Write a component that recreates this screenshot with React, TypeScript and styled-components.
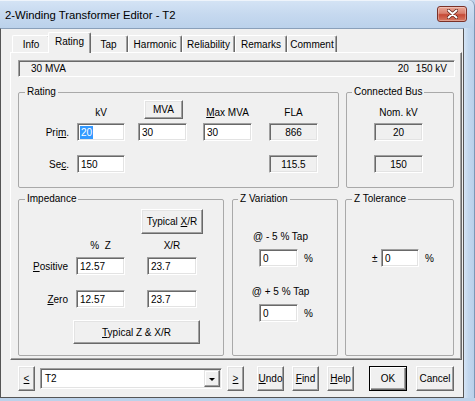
import React from 'react'
import styled, { createGlobalStyle } from 'styled-components'

const GlobalStyle = createGlobalStyle`
  html, body {
    margin: 0;
    padding: 0;
    background: #ffffff;
  }
  body {
    font-family: "Liberation Sans", Arial, sans-serif;
    font-size: 10px;
    color: #000;
  }
  * {
    box-sizing: border-box;
  }
`

const Window = styled.div`
  width: 475px;
  height: 401px;
  display: flex;
  flex-direction: column;
  background: #bed4ec;
  overflow: hidden;
`

const TitleBar = styled.div`
  height: 28px;
  flex: none;
  display: flex;
  align-items: center;
  justify-content: space-between;
  padding: 0 8px 0 5px;
  background: linear-gradient(180deg, #d5e4f5 0%, #c6d9ef 50%, #bbd2eb 100%);
  border-top-right-radius: 6px;
  box-shadow: inset -1px 0 0 #7d97b6, inset 0 1px 0 #eef4fb;
`

const Title = styled.span`
  font-size: 11.3px;
  padding-top: 1px;
  color: #000;
`

const CloseButton = styled.div`
  width: 30px;
  height: 16px;
  border-radius: 3px;
  border: 1px solid #7a3128;
  background: linear-gradient(180deg, #e9a898 0%, #d97f6d 45%, #c64a36 55%, #d77a63 100%);
  box-shadow: inset 0 0 0 1px rgba(255, 255, 255, 0.3);
  display: flex;
  align-items: center;
  justify-content: center;
`

const Body = styled.div`
  height: 370px;
  flex: none;
  display: flex;
`

const Client = styled.div`
  width: 464px;
  flex: none;
  display: flex;
  flex-direction: column;
  background: #f0f0f0;
  border: 1px solid #555;
  border-top-color: #8aa0ba;
`

const RightFrame = styled.div`
  flex: 1;
  background: linear-gradient(90deg, #d6e5f5 0%, #c2d7ee 40%, #b8cfe9 100%);
  box-shadow: inset -1px 0 0 #7d97b6;
`

const BottomFrame = styled.div`
  flex: 1;
  background: #bcd2ea;
`

const TabStrip = styled.div`
  height: 20px;
  margin-top: 3px;
  padding-left: 11px;
  display: flex;
  align-items: flex-end;
`

const Tab = styled.div<{ $w: number; $active?: boolean }>`
  position: relative;
  z-index: ${({ $active }) => ($active ? 1 : 0)};
  width: ${({ $w, $active }) => $w + ($active ? 4 : 0)}px;
  height: ${({ $active }) => ($active ? 21 : 17)}px;
  margin: ${({ $active }) => ($active ? '0 -2px -1px -2px' : '0')};
  padding-bottom: ${({ $active }) => ($active ? 3 : 0)}px;
  display: flex;
  align-items: center;
  justify-content: center;
  background: #f0f0f0;
  border-top: 1px solid #fff;
  border-left: 1px solid #fff;
  border-right: 1px solid #696969;
  border-radius: 2px 2px 0 0;
  box-shadow: inset -1px 0 0 #a0a0a0;
`

const TabPanel = styled.div`
  height: 308px;
  margin: 0 1px 0 9px;
  padding: 7px 6px 0 7px;
  display: flex;
  flex-direction: column;
  border: 1px solid;
  border-color: #fff #696969 #696969 #fff;
  box-shadow: inset -1px -1px 0 #a0a0a0;
`

const SummaryBar = styled.div`
  height: 17px;
  flex: none;
  display: flex;
  align-items: center;
  justify-content: space-between;
  padding: 0 7px 0 12px;
  border: 1px solid;
  border-color: #a0a0a0 #fff #fff #a0a0a0;
  box-shadow: inset 1px 1px 0 #696969;
`

const Voltages = styled.span`
  display: flex;
  gap: 7px;
`

const GroupRow = styled.div<{ $top: number }>`
  margin-top: ${({ $top }) => $top}px;
  display: flex;
  gap: 7px;
`

const Group = styled.fieldset<{ $w: number; $h: number; $gap?: number }>`
  width: ${({ $w }) => $w}px;
  height: ${({ $h }) => $h}px;
  flex: none;
  margin: 0 0 0 ${({ $gap }) => $gap ?? 0}px;
  padding: 0;
  min-width: 0;
  border: 1px solid #a9a9a9;
  border-radius: 2px;
`

const Legend = styled.legend<{ $indent?: number }>`
  margin-left: ${({ $indent }) => $indent ?? 6}px;
  padding: 0 2px;
  font-size: 10px;
  line-height: 12px;
`

const FormGrid = styled.div<{ $cols: string; $rows: string }>`
  display: grid;
  grid-template-columns: ${({ $cols }) => $cols};
  grid-template-rows: ${({ $rows }) => $rows};
  align-items: end;
  padding-top: 2px;
`

const ColHead = styled.div<{ $w: number }>`
  width: ${({ $w }) => $w}px;
  line-height: 12px;
  text-align: center;
`

const RowLabel = styled.div`
  height: 18px;
  display: flex;
  align-items: center;
  justify-content: flex-end;
  padding-right: 8px;
`

const TextBox = styled.div<{ $w: number; $readOnly?: boolean }>`
  width: ${({ $w }) => $w}px;
  height: 18px;
  display: flex;
  align-items: center;
  justify-content: ${({ $readOnly }) => ($readOnly ? 'center' : 'flex-start')};
  padding-left: ${({ $readOnly }) => ($readOnly ? 0 : 3)}px;
  background: ${({ $readOnly }) => ($readOnly ? '#f0f0f0' : '#fff')};
  border: 1px solid;
  border-color: #a0a0a0 #fff #fff #a0a0a0;
  box-shadow: inset 1px 1px 0 #696969, inset -1px -1px 0 #e3e3e3;
`

const Selected = styled.span`
  background: #3399ff;
  color: #fff;
  line-height: 13px;
  padding: 0 1px;
  margin-left: -1px;
`

const Button = styled.button<{ $w: number; $h?: number; $default?: boolean; $left?: number }>`
  width: ${({ $w }) => $w}px;
  height: ${({ $h }) => $h ?? 25}px;
  flex: none;
  padding: 0;
  margin: 0 0 0 ${({ $left }) => $left ?? 0}px;
  font-family: inherit;
  font-size: 10px;
  color: #000;
  text-align: center;
  white-space: nowrap;
  background: #f0f0f0;
  border: 1px solid;
  border-color: ${({ $default }) => ($default ? '#000' : '#fff #696969 #696969 #fff')};
  box-shadow: ${({ $default }) =>
    $default
      ? 'inset 1px 1px 0 #fff, inset -1px -1px 0 #696969, inset -2px -2px 0 #a0a0a0'
      : 'inset -1px -1px 0 #a0a0a0, inset 1px 1px 0 #e3e3e3'};
  cursor: default;
`

const Key = styled.span`
  text-decoration: underline;
`

const ImpedanceBody = styled.div`
  display: flex;
  flex-direction: column;
  padding-top: 4px;
`

const RightAligned = styled.div`
  display: flex;
  justify-content: flex-end;
  padding-right: 20px;
`

const ImpedanceGrid = styled(FormGrid)`
  margin-top: 6px;
  padding-top: 0;
`

const WideButtonRow = styled.div`
  margin-top: 12px;
  padding-left: 54px;
`

const VariationBody = styled.div<{ $top: number }>`
  display: flex;
  flex-direction: column;
  padding-top: ${({ $top }) => $top}px;
`

const CenterCaption = styled.div<{ $top?: number }>`
  margin-top: ${({ $top }) => $top ?? 0}px;
  padding-right: 9px;
  line-height: 12px;
  text-align: center;
`

const PercentRow = styled.div<{ $top?: number; $indent: number }>`
  margin-top: ${({ $top }) => $top ?? 0}px;
  padding-left: ${({ $indent }) => $indent}px;
  display: flex;
  align-items: center;
  gap: 6px;
`

const PlusMinus = styled.span`
  width: 6px;
  margin-right: -3px;
  font-size: 10px;
`

const Footer = styled.div`
  height: 37px;
  display: flex;
  align-items: center;
  padding-left: 17px;
`

const ButtonGroup = styled.div<{ $gap: number; $left?: number }>`
  display: flex;
  align-items: center;
  gap: ${({ $gap }) => $gap}px;
  margin-left: ${({ $left }) => $left ?? 0}px;
`

const Combo = styled.div`
  width: 182px;
  height: 21px;
  display: flex;
  align-items: center;
  justify-content: space-between;
  padding: 0 1px 0 4px;
  background: #fff;
  border: 1px solid;
  border-color: #a0a0a0 #fff #fff #a0a0a0;
  box-shadow: inset 1px 1px 0 #696969, inset -1px -1px 0 #e3e3e3;
`

const DropButton = styled.div`
  width: 16px;
  height: 17px;
  display: flex;
  align-items: center;
  justify-content: center;
  background: #f0f0f0;
  border: 1px solid;
  border-color: #e3e3e3 #696969 #696969 #e3e3e3;
  box-shadow: inset -1px -1px 0 #a0a0a0, inset 1px 1px 0 #fff;
`

const Arrow = styled.span`
  width: 0;
  height: 0;
  margin-top: 2px;
  border-left: 3px solid transparent;
  border-right: 3px solid transparent;
  border-top: 3px solid #000;
`

const TABS = [
  { label: 'Info', w: 38 },
  { label: 'Rating', w: 39, active: true },
  { label: 'Tap', w: 39 },
  { label: 'Harmonic', w: 54 },
  { label: 'Reliability', w: 53 },
  { label: 'Remarks', w: 52 },
  { label: 'Comment', w: 50 },
]

const RATING_COLS = '58px 61px 65px 66px 49px'
const RATING_ROWS = '19px 22px 32px'

export default function App() {
  return (
    <>
      <GlobalStyle />
      <Window>
        <TitleBar>
          <Title>2-Winding Transformer Editor - T2</Title>
          <CloseButton>
            <svg width="11" height="10" viewBox="0 0 11 10">
              <path d="M1.5 1.5 L9.5 8.5 M9.5 1.5 L1.5 8.5" stroke="#5a1d15" strokeWidth="3.4" strokeLinecap="round" />
              <path d="M1.5 1.5 L9.5 8.5 M9.5 1.5 L1.5 8.5" stroke="#fff" strokeWidth="2" strokeLinecap="round" />
            </svg>
          </CloseButton>
        </TitleBar>

        <Body>
          <Client>
            <TabStrip>
              {TABS.map((tab) => (
                <Tab key={tab.label} $w={tab.w} $active={tab.active}>
                  {tab.label}
                </Tab>
              ))}
            </TabStrip>

            <TabPanel>
              <SummaryBar>
                <span>30 MVA</span>
                <Voltages>
                  <span>20</span>
                  <span>150 kV</span>
                </Voltages>
              </SummaryBar>

              <GroupRow $top={9}>
                <Group $w={321} $h={102}>
                  <Legend $indent={6}>Rating</Legend>
                  <FormGrid $cols={RATING_COLS} $rows={RATING_ROWS}>
                    <span />
                    <ColHead $w={48}>kV</ColHead>
                    <Button type="button" $w={39} $h={19} $left={6}>MVA</Button>
                    <ColHead $w={49}><Key>M</Key>ax MVA</ColHead>
                    <ColHead $w={49}>FLA</ColHead>

                    <RowLabel>Pri<Key>m</Key>.</RowLabel>
                    <TextBox $w={48}><Selected>20</Selected></TextBox>
                    <TextBox $w={49}>30</TextBox>
                    <TextBox $w={49}>30</TextBox>
                    <TextBox $w={49} $readOnly>866</TextBox>

                    <RowLabel>Se<Key>c</Key>.</RowLabel>
                    <TextBox $w={48}>150</TextBox>
                    <span />
                    <span />
                    <TextBox $w={49} $readOnly>115.5</TextBox>
                  </FormGrid>
                </Group>

                <Group $w={108} $h={102}>
                  <Legend $indent={5}>Connected Bus</Legend>
                  <FormGrid $cols="27px 49px" $rows={RATING_ROWS}>
                    <span />
                    <ColHead $w={49}>Nom. kV</ColHead>
                    <span />
                    <TextBox $w={49} $readOnly>20</TextBox>
                    <span />
                    <TextBox $w={49} $readOnly>150</TextBox>
                  </FormGrid>
                </Group>
              </GroupRow>

              <GroupRow $top={5}>
                <Group $w={206} $h={163}>
                  <Legend $indent={6}>Impedance</Legend>
                  <ImpedanceBody>
                    <RightAligned>
                      <Button type="button" $w={62} $h={25}>Typical <Key>X</Key>/R</Button>
                    </RightAligned>
                    <ImpedanceGrid $cols="57px 71px 50px" $rows="12px 23px 33px">
                      <span />
                      <ColHead $w={49}>%&nbsp; Z</ColHead>
                      <ColHead $w={50}>X/R</ColHead>

                      <RowLabel><Key>P</Key>ositive</RowLabel>
                      <TextBox $w={49}>12.57</TextBox>
                      <TextBox $w={50}>23.7</TextBox>

                      <RowLabel><Key>Z</Key>ero</RowLabel>
                      <TextBox $w={49}>12.57</TextBox>
                      <TextBox $w={50}>23.7</TextBox>
                    </ImpedanceGrid>
                    <WideButtonRow>
                      <Button type="button" $w={127} $h={24}><Key>T</Key>ypical Z &amp; X/R</Button>
                    </WideButtonRow>
                  </ImpedanceBody>
                </Group>

                <Group $w={106} $h={163} $gap={1}>
                  <Legend $indent={5}>Z Variation</Legend>
                  <VariationBody $top={26}>
                    <CenterCaption>@ - 5 % Tap</CenterCaption>
                    <PercentRow $top={6} $indent={26}>
                      <TextBox $w={39}>0</TextBox>
                      <span>%</span>
                    </PercentRow>
                    <CenterCaption $top={19}>@ + 5 % Tap</CenterCaption>
                    <PercentRow $top={6} $indent={26}>
                      <TextBox $w={39}>0</TextBox>
                      <span>%</span>
                    </PercentRow>
                  </VariationBody>
                </Group>

                <Group $w={109} $h={163}>
                  <Legend $indent={6}>Z Tolerance</Legend>
                  <VariationBody $top={44}>
                    <PercentRow $indent={26}>
                      <PlusMinus>±</PlusMinus>
                      <TextBox $w={38}>0</TextBox>
                      <span>%</span>
                    </PercentRow>
                  </VariationBody>
                </Group>
              </GroupRow>
            </TabPanel>

            <Footer>
              <ButtonGroup $gap={5}>
                <Button type="button" $w={17}><Key>&lt;</Key></Button>
                <Combo>
                  <span>T2</span>
                  <DropButton><Arrow /></DropButton>
                </Combo>
                <Button type="button" $w={17}><Key>&gt;</Key></Button>
              </ButtonGroup>
              <ButtonGroup $gap={8} $left={13}>
                <Button type="button" $w={27}><Key>U</Key>ndo</Button>
                <Button type="button" $w={27}><Key>F</Key>ind</Button>
                <Button type="button" $w={27}><Key>H</Key>elp</Button>
              </ButtonGroup>
              <ButtonGroup $gap={9} $left={15}>
                <Button type="button" $w={38} $default>OK</Button>
                <Button type="button" $w={38}>Cancel</Button>
              </ButtonGroup>
            </Footer>
          </Client>
          <RightFrame />
        </Body>
        <BottomFrame />
      </Window>
    </>
  )
}
